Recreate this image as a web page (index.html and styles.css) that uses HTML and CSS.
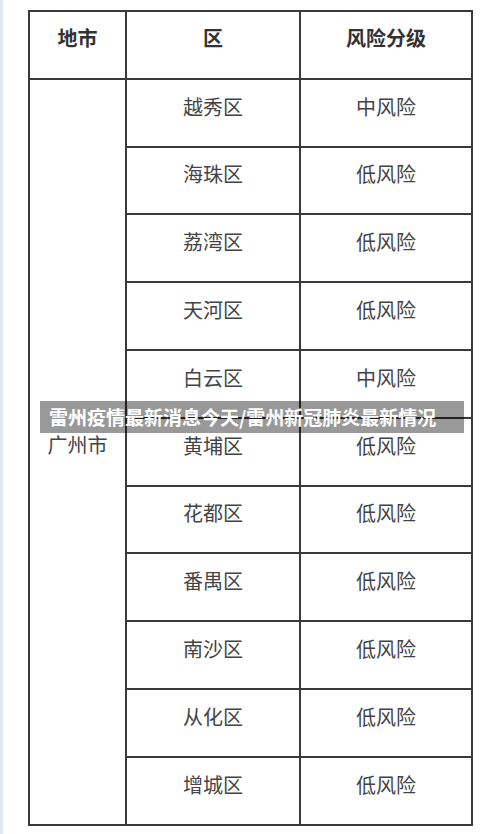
FILE: index.html
```html
<!DOCTYPE html>
<html lang="zh-CN">
<head>
<meta charset="utf-8">
<link rel="stylesheet" href="styles.css">
</head>
<body>
<div class="page">
  <table class="risk">
    <colgroup>
      <col class="c1"><col class="c2"><col class="c3">
    </colgroup>
    <thead>
      <tr><th>地市</th><th>区</th><th>风险分级</th></tr>
    </thead>
    <tbody>
      <tr><td rowspan="11" class="city">广州市</td><td>越秀区</td><td>中风险</td></tr>
      <tr><td>海珠区</td><td>低风险</td></tr>
      <tr><td>荔湾区</td><td>低风险</td></tr>
      <tr><td>天河区</td><td>低风险</td></tr>
      <tr><td>白云区</td><td>中风险</td></tr>
      <tr><td>黄埔区</td><td>低风险</td></tr>
      <tr><td>花都区</td><td>低风险</td></tr>
      <tr><td>番禺区</td><td>低风险</td></tr>
      <tr><td>南沙区</td><td>低风险</td></tr>
      <tr><td>从化区</td><td>低风险</td></tr>
      <tr><td>增城区</td><td>低风险</td></tr>
    </tbody>
  </table>
  <div class="banner">雷州疫情最新消息今天/雷州新冠肺炎最新情况</div>
</div>
</body>
</html>
```
FILE: styles.css
```css
html, body {
  margin: 0;
  padding: 0;
  background: #fff;
}
body {
  width: 500px;
  height: 834px;
  overflow: hidden;
  font-family: "Noto Sans CJK SC", "Noto Sans", sans-serif;
}
.page {
  position: relative;
  width: 500px;
  height: 834px;
  box-sizing: border-box;
  border-left: 3px solid #dfe8f1;
  padding-top: 10px;
  padding-left: 25px;
}
.risk {
  border-collapse: collapse;
  width: 443px;
  table-layout: fixed;
}
.c1 { width: 97px; }
.c2 { width: 174px; }
.c3 { width: 172px; }
.risk th, .risk td {
  border: 2px solid #3a3a3a;
  text-align: center;
  vertical-align: middle;
  padding: 0 0 12px 0;
  font-size: 20px;
  line-height: 24px;
  color: #444;
}
.risk tr {
  height: 67.8px;
}
.risk th {
  font-weight: 700;
  color: #333;
  padding-bottom: 14px;
}
.risk td.city {
  padding-bottom: 14px;
}
.banner {
  position: absolute;
  left: 37px;
  top: 401px;
  width: 424px;
  height: 32px;
  box-sizing: border-box;
  padding-left: 9px;
  background: rgba(0, 0, 0, 0.4);
  color: #fff;
  font-weight: 700;
  font-size: 19px;
  line-height: 32px;
  white-space: nowrap;
}
```
